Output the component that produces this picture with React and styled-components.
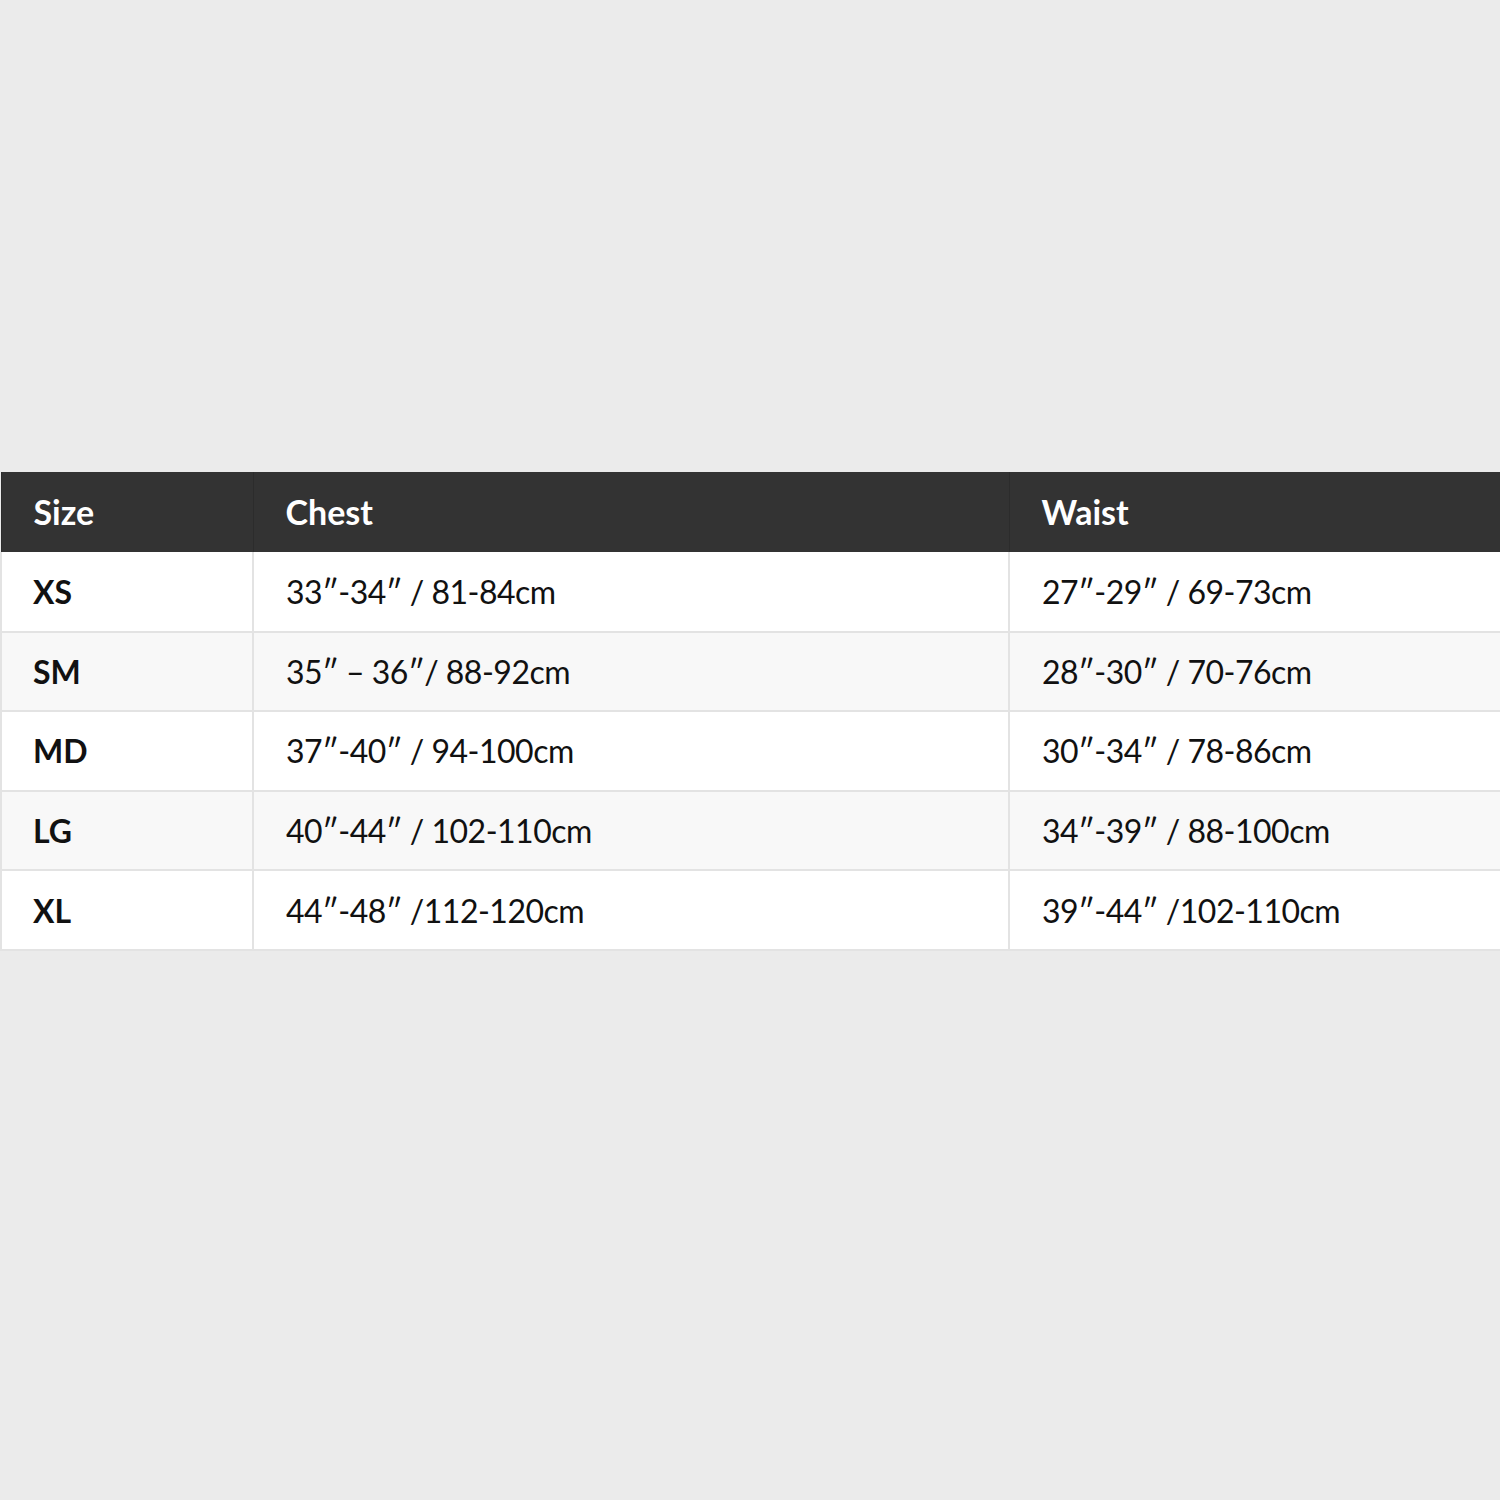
import React from "react";
import styled, { createGlobalStyle } from "styled-components";

const Global = createGlobalStyle`
  html, body { margin: 0; padding: 0; background: #ebebeb; }
  body { font-family: Lato, "Open Sans", sans-serif; }
`;

const Page = styled.div`
  width: 1500px;
  height: 1500px;
  padding-top: 472px;
  box-sizing: border-box;
  overflow: hidden;
`;

const Table = styled.table`
  width: 1502px;
  border-collapse: collapse;
  table-layout: fixed;
  font-family: Lato, sans-serif;
  font-size: 32px;
  color: #111;
`;

const HeadCell = styled.th`
  background: #333333;
  color: #fff;
  font-size: 34px;
  font-weight: 700;
  text-align: left;
  height: 80px;
  padding: 0 0 2px 32px;
  box-sizing: border-box;
  border-left: 1px solid #2c2c2c;
`;

const Row = styled.tr`
  background: ${(p) => (p.$alt ? "#f8f8f8" : "#ffffff")};
`;

const Cell = styled.td`
  height: 79.6px;
  padding: 0 0 0 ${(p) => (p.$bold ? 31 : 32)}px;
  box-sizing: border-box;
  border: 2px solid #e3e3e3;
  border-top: none;
  font-weight: ${(p) => (p.$bold ? 700 : 400)};
  letter-spacing: ${(p) => (p.$bold ? 0 : -0.5)}px;
  white-space: nowrap;
`;

const rows = [
  ["XS", "33″-34″ / 81-84cm", "27″-29″ / 69-73cm"],
  ["SM", "35″ – 36″/ 88-92cm", "28″-30″ / 70-76cm"],
  ["MD", "37″-40″ / 94-100cm", "30″-34″ / 78-86cm"],
  ["LG", "40″-44″ / 102-110cm", "34″-39″ / 88-100cm"],
  ["XL", "44″-48″ /112-120cm", "39″-44″ /102-110cm"],
];

export default function App() {
  return (
    <>
      <Global />
      <Page>
        <Table>
          <colgroup>
            <col style={{ width: 252 }} />
            <col style={{ width: 756 }} />
            <col style={{ width: 494 }} />
          </colgroup>
          <thead>
            <tr>
              <HeadCell>Size</HeadCell>
              <HeadCell>Chest</HeadCell>
              <HeadCell>Waist</HeadCell>
            </tr>
          </thead>
          <tbody>
            {rows.map((r, i) => (
              <Row key={r[0]} $alt={i % 2 === 1}>
                <Cell $bold>{r[0]}</Cell>
                <Cell>{r[1]}</Cell>
                <Cell>{r[2]}</Cell>
              </Row>
            ))}
          </tbody>
        </Table>
      </Page>
    </>
  );
}
